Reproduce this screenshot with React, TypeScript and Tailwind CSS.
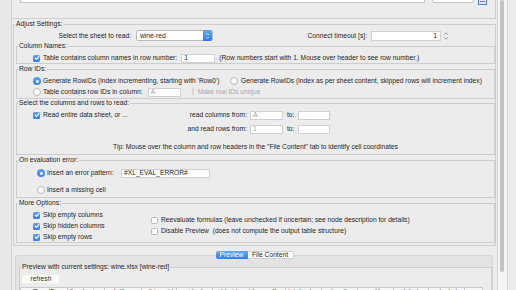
import type { ReactNode } from 'react';

function Check({ on, off }: { on?: boolean; off?: boolean }) {
	if (on) {
		return (
			<span className="flex h-[7px] w-[7px] shrink-0 items-center justify-center rounded-[1.5px] bg-linear-to-b from-[#5ca4f9] to-[#2f7ff2]">
				<svg viewBox="0 0 8 8" className="h-[6px] w-[6px]">
					<path d="M1.6 4.2 3.3 5.8 6.5 2.1" fill="none" stroke="#fff" strokeWidth="1.4" strokeLinecap="round" strokeLinejoin="round" />
				</svg>
			</span>
		);
	}
	return (
		<span
			className={`h-[7px] w-[7px] shrink-0 rounded-[1.5px] border ${off ? 'border-[#d9d9d9] bg-[#f5f5f5]' : 'border-[#b9b9b9] bg-white'}`}
		/>
	);
}

function Radio({ on }: { on?: boolean }) {
	return on ? (
		<span className="flex h-[8px] w-[8px] shrink-0 items-center justify-center rounded-full bg-linear-to-b from-[#5ca4f9] to-[#2f7ff2]">
			<span className="h-[3px] w-[3px] rounded-full bg-white" />
		</span>
	) : (
		<span className="h-[8px] w-[8px] shrink-0 rounded-full border border-[#b9b9b9] bg-white" />
	);
}

function Field({ className, muted, children }: { className?: string; muted?: boolean; children?: ReactNode }) {
	return (
		<span
			className={`flex h-[9px] shrink-0 items-center border border-[#d0d0d0] bg-white px-[2px] ${muted ? 'text-[#a0a0a0]' : ''} ${className ?? ''}`}
		>
			{children}
		</span>
	);
}

function Group({ title, className, children }: { title: string; className?: string; children?: ReactNode }) {
	return (
		<fieldset className={`border border-[#cdcdcd] ${className ?? ''}`}>
			<legend className="ml-[1px] px-[1px] leading-[6px]">{title}</legend>
			{children}
		</fieldset>
	);
}

const columns: [string, number][] = [
	['Row ID', 48],
	['fixed acidity', 37],
	['volatile acidity', 37],
	['citric acid', 35],
	['residual sugar', 36],
	['chlorides', 37],
	['free sulfur dioxide', 36],
	['total sulfur dioxide', 36],
	['density', 36],
	['pH', 36],
	['sulphates', 35],
	['alcohol', 36],
	['quality', 18],
];

export default function App() {
	return (
		<div className="flex h-[290px] w-[516px] overflow-hidden whitespace-nowrap bg-[#ececec] font-['Liberation_Sans',Arial,sans-serif] text-[6.7px] leading-[8px] text-[#1e1e1e]">
			<div className="w-[12px] shrink-0 border-r border-[#d2d2d2] bg-[#e8e8e8]" />

			<div className="flex w-[485px] shrink-0 flex-col">
				{/* file location */}
				<div className="h-[19px] w-[484px] shrink-0 border-b border-r border-[#cfcfcf]">
					<div className="-mt-[9px] flex h-[12px] items-end">
						<div className="ml-[8px] flex h-[12px] w-[405px] items-center justify-between border border-[#c8c8c8] bg-white pl-[2px] pr-[3px] text-[#555]">
							<span>knime://knime.workflow/../data/wine.xlsx</span>
							<svg viewBox="0 0 6 6" className="h-[5px] w-[5px]">
								<path d="M1 2 3 4 5 2" fill="none" stroke="#777" strokeWidth="1" />
							</svg>
						</div>
						<div className="ml-[7px] flex h-[12px] w-[42px] items-center justify-center rounded-[2px] border border-[#c4c4c4] bg-white">
							Browse...
						</div>
						<svg viewBox="0 0 9 7" className="-mb-[2px] ml-[4px] h-[7px] w-[9px]">
							<rect x="0.5" y="0.5" width="8" height="6" fill="#dfe6f7" stroke="#5b7fcf" />
							<path d="M2 3.5h5" stroke="#5b7fcf" />
						</svg>
					</div>
				</div>

				<fieldset className="ml-[1px] mt-[2px] w-[483px] shrink-0 border border-[#cdcdcd] pb-[2px]">
					<legend className="ml-[1px] px-[1px] leading-[6px]">Adjust Settings:</legend>

					<div className="mt-[3px] flex h-[11px] items-center">
						<span className="w-[117px] text-right">Select the sheet to read:</span>
						<div className="ml-[5px] flex h-[11px] w-[77px] items-center rounded-[2px] border border-[#bdbdbd] bg-white">
							<span className="flex-1 pl-[3px]">wine-red</span>
							<span className="flex h-[11px] w-[9px] items-center justify-center rounded-r-[2px] bg-linear-to-b from-[#60a7fa] to-[#2a79f0]">
								<svg viewBox="0 0 6 9" className="h-[8px] w-[5px]">
									<path d="M1.2 3.4 3 1.6 4.8 3.4M1.2 5.6 3 7.4 4.8 5.6" fill="none" stroke="#fff" strokeWidth="0.9" />
								</svg>
							</span>
						</div>
						<span className="w-[154px] text-right">Connect timeout [s]:</span>
						<span className="ml-[4px] flex h-[10px] w-[70px] items-center justify-end border border-[#d0d0d0] bg-white pr-[3px]">1</span>
						<svg viewBox="0 0 6 10" className="ml-[2px] h-[10px] w-[6px]">
							<path d="M1.3 3.6 3 1.8 4.7 3.6M1.3 6.4 3 8.2 4.7 6.4" fill="none" stroke="#8a8a8a" strokeWidth="0.9" />
						</svg>
					</div>

					<Group title="Column Names:" className="ml-[2px] mt-[2px] w-[479px]">
						<div className="mt-[4px] flex h-[10px] items-center pl-[16px]">
							<Check on />
							<span className="ml-[3px]">Table contains column names in row number:</span>
							<Field className="ml-[4px] w-[34px]">1</Field>
							<span className="ml-[4px]">(Row numbers start with 1. Mouse over header to see row number.)</span>
						</div>
					</Group>

					<Group title="Row IDs:" className="ml-[2px] mt-[2px] w-[479px] pb-[1px]">
						<div className="mt-[4px] flex h-[10px] items-center pl-[16px]">
							<div className="flex w-[197px] items-center">
								<Radio on />
								<span className="ml-[2px]">Generate RowIDs (index incrementing, starting with 'Row0')</span>
							</div>
							<Radio />
							<span className="ml-[3px]">
								Generate RowIDs (index as per sheet content, skipped rows will increment index)
							</span>
						</div>
						<div className="mt-[1px] flex h-[10px] items-center pl-[16px]">
							<Radio />
							<span className="ml-[2px]">Table contains row IDs in column:</span>
							<Field muted className="ml-[5px] w-[33px]">
								A
							</Field>
							<span className="ml-[11px]">
								<Check off />
							</span>
							<span className="ml-[4px] text-[#a8a8a8]">Make row IDs unique</span>
						</div>
					</Group>

					<Group title="Select the columns and rows to read:" className="ml-[2px] mt-[1px] w-[479px] pb-[1px]">
						<div className="mt-[4px] flex h-[10px] items-center">
							<div className="flex w-[110px] items-center pl-[16px]">
								<Check on />
								<span className="ml-[3px]">Read entire data sheet, or ...</span>
							</div>
							<span className="w-[120px] text-right">read columns from:</span>
							<Field muted className="ml-[3px] w-[33px]">
								A
							</Field>
							<span className="ml-[4px] w-[11px]">to:</span>
							<Field className="w-[32px]" />
						</div>
						<div className="mt-[4px] flex h-[10px] items-center">
							<span className="w-[230px] text-right">and read rows from:</span>
							<Field muted className="ml-[3px] w-[33px]">
								1
							</Field>
							<span className="ml-[4px] w-[11px]">to:</span>
							<Field className="w-[32px]" />
						</div>
						<div className="mt-[9px] h-[10px] text-center">
							Tip: Mouse over the column and row headers in the "File Content" tab to identify cell coordinates
						</div>
					</Group>

					<Group title="On evaluation error:" className="ml-[2px] mt-[2px] w-[479px] pb-[2px]">
						<div className="mt-[5px] flex h-[10px] items-center pl-[20px]">
							<div className="flex w-[84px] items-center">
								<Radio on />
								<span className="ml-[2px]">Insert an error pattern:</span>
							</div>
							<Field className="w-[89px]">#XL_EVAL_ERROR#</Field>
						</div>
						<div className="mt-[7px] flex h-[10px] items-center pl-[20px]">
							<Radio />
							<span className="ml-[2px]">Insert a missing cell</span>
						</div>
					</Group>

					<Group title="More Options:" className="ml-[2px] mt-[2px] w-[479px]">
						<div className="flex">
							<div className="mt-[4px] flex w-[134px] flex-col gap-[1px] pl-[16px]">
								{['Skip empty columns', 'Skip hidden columns', 'Skip empty rows'].map((label) => (
									<div key={label} className="flex h-[10px] items-center">
										<Check on />
										<span className="ml-[3px]">{label}</span>
									</div>
								))}
							</div>
							<div className="mt-[9px] flex flex-col gap-[1px]">
								<div className="flex h-[10px] items-center">
									<Check />
									<span className="ml-[3px]">
										Reevaluate formulas (leave unchecked if uncertain; see node description for details)
									</span>
								</div>
								<div className="flex h-[10px] items-center">
									<Check />
									<span className="ml-[3px] whitespace-pre">
										Disable Preview  (does not compute the output table structure)
									</span>
								</div>
							</div>
						</div>
					</Group>
				</fieldset>

				{/* tabs */}
				<div className="relative z-10 mt-[5px] flex h-[8px] shrink-0 justify-center">
					<span className="flex w-[32px] items-center justify-center rounded-l-[2px] bg-linear-to-b from-[#63aafa] to-[#2f7ff2] text-white">
						Preview
					</span>
					<span className="flex w-[46px] items-center justify-center rounded-r-[2px] border border-l-0 border-[#d0d0d0] bg-white">
						File Content
					</span>
				</div>
				<div className="-mt-[4px] ml-[3px] w-[478px] flex-1 rounded-t-[3px] border border-[#d6d6d6] bg-[#e3e3e3]">
					<fieldset className="ml-[3px] mt-[8px] w-[473px] border border-[#cdcdcd] bg-[#ececec] pb-[4px]">
						<legend className="ml-[1px] px-[1px] leading-[6px]">Preview with current settings: wine.xlsx [wine-red]</legend>
						<div className="ml-[3px] mt-[5px] flex h-[8px] w-[36px] items-center justify-center rounded-[2px] bg-white">
							refresh
						</div>
						<div className="mt-[4px] flex">
							{columns.map(([name, w]) => (
								<span
									key={name}
									className="h-[10px] shrink-0 truncate border border-l-0 border-[#c9c9c9] bg-[#f6f6f6] px-[2px] text-center first:border-l"
									style={{ width: w }}
								>
									{name}
								</span>
							))}
						</div>
					</fieldset>
				</div>
			</div>

			{/* scrollbar */}
			<div className="w-[10px] shrink-0 border-l border-[#d8d8d8] bg-[#f4f4f4] pl-[2px]">
				<div className="h-[272px] w-[4px] rounded-full bg-[#c3c3c3]" />
			</div>
			<div className="flex-1 border-l border-[#d8d8d8] bg-[#ebebeb]" />
		</div>
	);
}
